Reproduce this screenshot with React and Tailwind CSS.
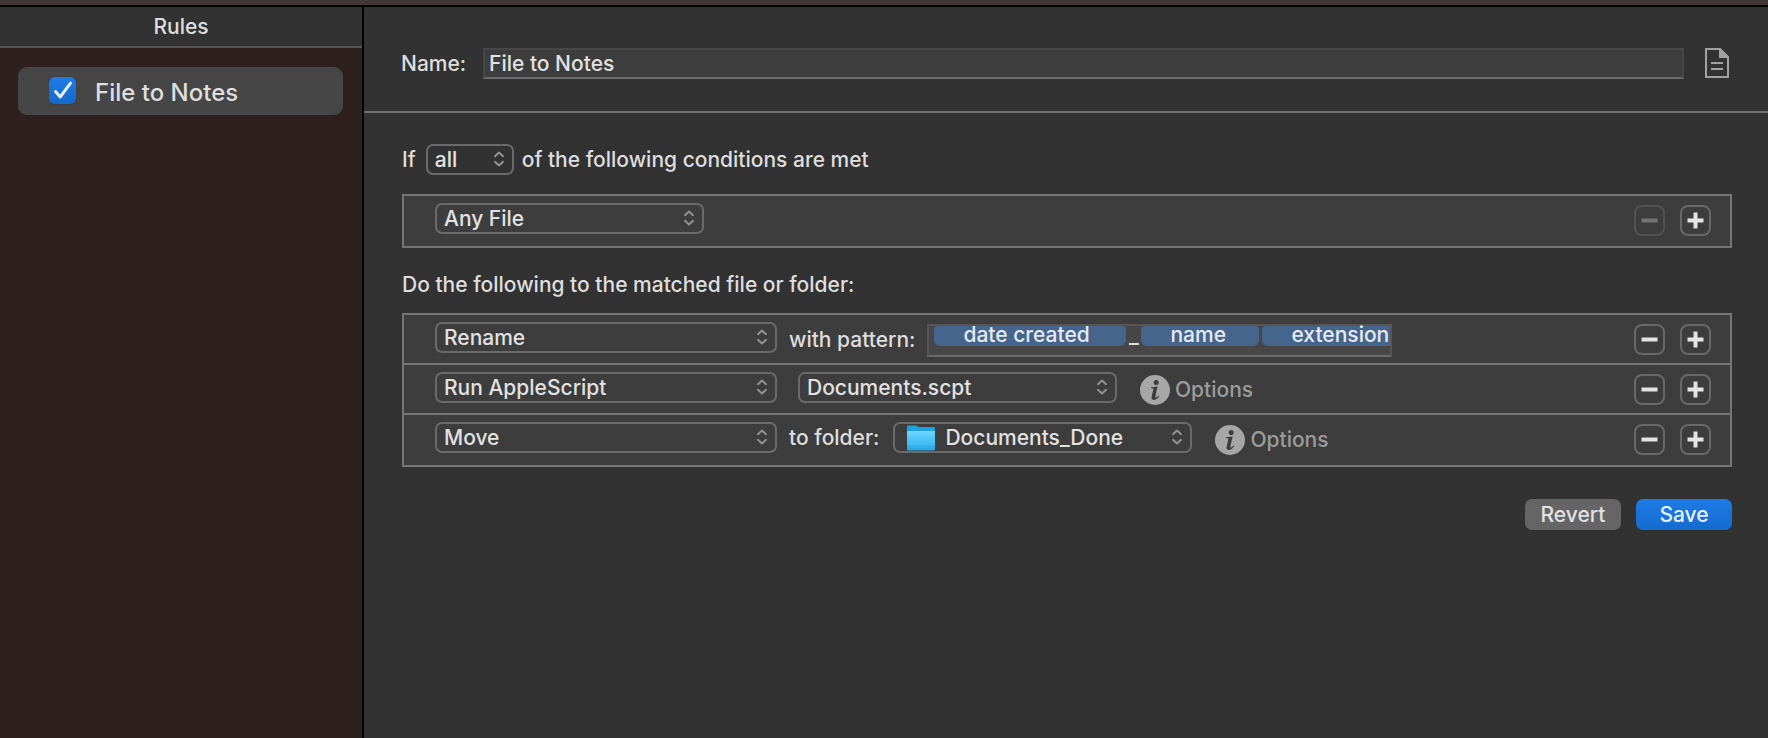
import { useState } from "react";

function Chevrons() {
  return (
    <svg viewBox="0 0 12 16" className="pointer-events-none absolute right-[9px] top-[7px] h-4 w-3" fill="none" stroke="#929292" strokeWidth="2" strokeLinecap="round" strokeLinejoin="round">
      <path d="M2 5.2 6 1.6l4 3.6M2 10.8 6 14.4l4-3.6" />
    </svg>
  );
}

function Popup({ label, options, width, icon }) {
  return (
    <span className={`relative inline-flex h-[31px] shrink-0 ${width}`}>
      <select
        aria-label={label}
        className={`h-full w-full appearance-none rounded-[7px] border-2 border-[#6a6a6a] bg-transparent pr-7 text-[21px] leading-6 text-[#e2e2e2] outline-none ${icon ? "pl-[50px]" : "pl-[7px]"}`}
      >
        {options.map((o) => (
          <option key={o} className="bg-[#3d3d3d]">{o}</option>
        ))}
      </select>
      {icon}
      <Chevrons />
    </span>
  );
}

function FolderIcon() {
  return (
    <svg viewBox="0 0 28 26" className="pointer-events-none absolute left-[14px] top-[3px] h-[26px] w-7">
      <defs>
        <linearGradient id="folderFront" x1="0" y1="0" x2="0" y2="1">
          <stop offset="0" stopColor="#6fd8fe" />
          <stop offset="0.3" stopColor="#55cafb" />
          <stop offset="0.75" stopColor="#3db8f0" />
          <stop offset="1" stopColor="#1fa2df" />
        </linearGradient>
      </defs>
      <path d="M0 1.2Q0 .4 .8.4H9.5L12 2H27.2Q28 2 28 2.8V25H0Z" fill="#1ba1dc" />
      <path d="M0 6H28V24.6Q28 25.6 27 25.6H1Q0 25.6 0 24.6Z" fill="url(#folderFront)" />
      <path d="M0 21.2H28" stroke="#2ba7e2" strokeWidth=".8" />
    </svg>
  );
}

function Options() {
  return (
    <button type="button" className="mt-0.5 flex h-[31px] items-center gap-[5px] text-[#9c9c9c]">
      <svg viewBox="0 0 30 30" className="size-[30px]">
        <circle cx="15" cy="15" r="15" fill="#a6a6a6" />
        <circle cx="16.2" cy="7.4" r="2.5" fill="#3d3d3d" />
        <path d="M11 12.2 17.6 11.4 15.4 21.2Q15.1 22.8 16 22.6 17 22.3 18.4 20.5L19.3 21.2Q16.6 24.9 13.7 24.9 10.9 24.8 11.6 21.8L13.3 14.4Q13.5 13.3 12.4 13.2L10.8 13.1Z" fill="#3d3d3d" />
      </svg>
      Options
    </button>
  );
}

function SquareButton({ label, plus, disabled }) {
  return (
    <button
      type="button"
      aria-label={label}
      disabled={disabled}
      className="flex size-[31px] items-center justify-center rounded-[8px] border-2 border-[#686868] text-[#e4e4e4] disabled:border-[#525252] disabled:text-[#737373]"
    >
      <svg viewBox="0 0 17 17" className="size-[17px]" fill="none" stroke="currentColor" strokeWidth="4">
        <path d="M.5 8.5H16.5" />
        {plus && <path d="M8.5 .5V16.5" />}
      </svg>
    </button>
  );
}

function Row({ children, noun, locked }) {
  return (
    <li className="flex h-[50px] items-start pl-[31px] pr-[19px] pt-[7px]">
      {children}
      <span className="ml-auto mt-0.5 flex gap-[15px]">
        <SquareButton label={`Remove ${noun}`} disabled={locked} />
        <SquareButton label={`Add ${noun}`} plus />
      </span>
    </li>
  );
}

function Token({ children, className }) {
  return (
    <span className={`h-5 bg-[#46658c] pl-[29px] leading-[18px] text-[#e6ebf2] ${className}`}>
      {children}
    </span>
  );
}

export default function App() {
  const [enabled, setEnabled] = useState(true);
  const [name, setName] = useState("File to Notes");

  return (
    <div className="flex min-h-screen flex-col bg-[#323232] font-['Inter','Liberation_Sans',sans-serif] text-[21px] leading-6 font-medium text-[#dedede]">
      <div className="h-[5px] bg-[#433837]" />
      <div className="flex grow border-t-2 border-black">
        <aside className="flex w-[364px] shrink-0 flex-col border-r-2 border-black bg-[#2e201e]">
          <h2 className="flex h-[41px] items-center justify-center border-b-2 border-[#555555] bg-[#323232]">Rules</h2>
          <label className="ml-[18px] mr-[19px] mt-[19px] flex h-12 items-center rounded-[9px] bg-[#464646] pl-[31px] text-[24px]">
            <input type="checkbox" checked={enabled} onChange={(e) => setEnabled(e.target.checked)} className="peer sr-only" />
            <span className="mb-0.5 mr-[19px] flex size-[27px] items-center justify-center rounded-[6px] bg-[#5a5a5a] bg-linear-to-b shadow-sm peer-checked:from-[#1f7be6] peer-checked:to-[#1369cc]">
              {enabled && (
                <svg viewBox="0 0 20 20" className="size-5" fill="none" stroke="#e3effc" strokeWidth="3" strokeLinecap="round" strokeLinejoin="round">
                  <path d="M2.5 11.5 7.2 17 17.5 3.2" />
                </svg>
              )}
            </span>
            <span className="pt-[3px]">File to Notes</span>
          </label>
        </aside>

        <main className="min-w-0 grow">
          <div className="flex h-[106px] items-start border-b-2 border-[#6e6e6e] pl-[37px] pr-[39px] pt-[41px]">
            <label htmlFor="rule-name" className="w-[82px] shrink-0 leading-[31px]">Name:</label>
            <input
              id="rule-name"
              value={name}
              onChange={(e) => setName(e.target.value)}
              className="h-[31px] min-w-0 grow border-2 border-[#474747] border-b-[#6b6b6b] bg-[#3d3d3d] px-1 text-[#e2e2e2] outline-none"
            />
            <button type="button" aria-label="Notes" className="ml-[21px] shrink-0">
              <svg viewBox="0 0 24 30" className="h-[30px] w-6" fill="none" stroke="#a2a2a2" strokeWidth="2">
                <path d="M1 1H15L23 9V29H1Z" />
                <path d="M14 1H15.5L23 8.5V10H14Z" fill="#a2a2a2" stroke="none" />
                <path d="M6 15H18M6 21H18" />
              </svg>
            </button>
          </div>

          <div className="pl-[38px] pr-9 pt-[31px]">
            <div className="flex h-[31px] items-center">
              <span className="mr-2.5">If</span>
              <Popup label="Match" options={["all", "any", "none"]} width="w-[88px]" />
              <span className="ml-2">of the following conditions are met</span>
            </div>

            <ul className="mt-[19px] border-2 border-[#757575] bg-[#3d3d3d]">
              <Row noun="condition" locked>
                <Popup label="Condition" options={["Any File"]} width="w-[269px]" />
              </Row>
            </ul>

            <p className="mb-4 mt-[25px]">Do the following to the matched file or folder:</p>

            <ul className="divide-y-2 divide-[#757575] border-2 border-[#757575] bg-[#3d3d3d]">
              <Row noun="action">
                <Popup label="Action" options={["Rename"]} width="w-[342px]" />
                <span className="ml-3 mt-0.5 leading-[31px]">with pattern:</span>
                <div role="textbox" aria-label="Rename pattern" className="ml-3 mt-0.5 flex h-[33px] w-[465px] border-2 border-[#565656] border-b-[#6b6b6b] bg-[#474747] pl-[5px]">
                  <Token className="w-48 shrink-0 rounded-b-[6px] rounded-t-sm">date created</Token>
                  <span className="w-[15px] shrink-0 text-center leading-5">_</span>
                  <Token className="w-[118px] shrink-0 rounded-b-[6px] rounded-t-sm">name</Token>
                  <Token className="ml-[3px] grow rounded-bl-[6px] rounded-tl-sm">extension</Token>
                </div>
              </Row>
              <Row noun="action">
                <Popup label="Action" options={["Run AppleScript"]} width="w-[342px]" />
                <span className="ml-[21px] mr-[23px] flex">
                  <Popup label="Script" options={["Documents.scpt"]} width="w-[319px]" />
                </span>
                <Options />
              </Row>
              <Row noun="action">
                <Popup label="Action" options={["Move"]} width="w-[342px]" />
                <span className="ml-3 leading-[31px]">to folder:</span>
                <span className="ml-3.5 mr-[23px] flex">
                  <Popup label="Folder" options={["Documents_Done"]} width="w-[299px]" icon={<FolderIcon />} />
                </span>
                <Options />
              </Row>
            </ul>

            <div className="mt-8 flex justify-end gap-[15px]">
              <button type="button" className="h-[31px] w-24 rounded-[7px] bg-[#656565] text-[#e2e2e2]">Revert</button>
              <button type="button" className="h-[31px] w-24 rounded-[7px] bg-linear-to-b from-[#1d7ce8] to-[#156bcd] text-[#e6f0fc]">Save</button>
            </div>
          </div>
        </main>
      </div>
    </div>
  );
}
